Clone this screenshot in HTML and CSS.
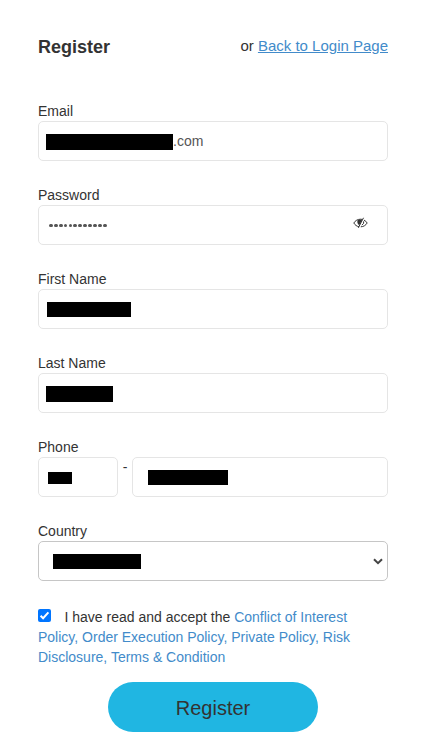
FILE: index.html
```html
<!DOCTYPE html>
<html lang="en">
<head>
<meta charset="utf-8">
<title>Register</title>
<link rel="stylesheet" href="styles.css">
</head>
<body>
<form class="register">
  <header class="head">
    <h1>Register</h1>
    <p>or <a href="#">Back to Login Page</a></p>
  </header>

  <div class="field">
    <label>Email</label>
    <div class="box email"><span class="mask"></span>.com</div>
  </div>
  <div class="field">
    <label>Password</label>
    <div class="box password">
      <span class="dots"><i></i><i></i><i></i><i></i><i></i><i></i><i></i><i></i><i></i><i></i><i></i><i></i></span>
      <svg class="eye" width="15" height="12" viewBox="0 0 15 12" fill="none" stroke="#333" stroke-width="1">
        <path d="M6.200 9.800C3.800 9.400 2 8 .8 6C2.300 3.600 4.700 2.200 7.500 2.200L9 2.400"/>
        <path d="M11 3.100C12.300 3.700 13.400 4.700 14.200 6C12.700 8.400 10.500 9.700 7.800 9.800"/>
        <path d="M4.600 3.200Q3.600 6.400 6.200 8.200L9.300 2.700Q6.600 1.900 4.600 3.200Z" fill="#333" stroke="none"/>
        <path d="M10.700 4.300Q11.300 6.800 8.800 8.100"/>
        <path d="M10.500.8 5.300 10.800"/>
      </svg>
    </div>
  </div>
  <div class="field">
    <label>First Name</label>
    <div class="box first"><span class="mask"></span></div>
  </div>
  <div class="field">
    <label>Last Name</label>
    <div class="box last"><span class="mask"></span></div>
  </div>
  <div class="field">
    <label>Phone</label>
    <div class="phone-row">
      <div class="box code"><span class="mask"></span></div>
      <span class="dash">-</span>
      <div class="box phone"><span class="mask"></span></div>
    </div>
  </div>
  <div class="field">
    <label>Country</label>
    <div class="box country">
      <span class="mask"></span>
      <svg class="chevron" width="10" height="7" viewBox="0 0 10 7" fill="none" stroke="#444" stroke-width="2"><path d="M1 1.200 5 5.200 9 1.200"/></svg>
    </div>
  </div>

  <p class="terms"><span class="check"><svg width="13" height="13" viewBox="0 0 13 13" fill="none" stroke="#fff" stroke-width="2"><path d="M2.600 6.700 5.100 9.200 10.400 3.300"/></svg></span>I have read and accept the <a href="#">Conflict of Interest Policy, Order Execution Policy, Private Policy, Risk Disclosure, Terms &amp; Condition</a></p>
  <button class="submit" type="button">Register</button>
</form>
</body>
</html>
```
FILE: styles.css
```css
* { box-sizing: border-box; }
body {
  margin: 0;
  background: #fff;
  color: #333;
  font: 14px/20px "Liberation Sans", Arial, sans-serif;
}
a { color: #428bca; text-decoration: none; }
.register { width: 350px; margin-left: 38px; padding-top: 36px; }
.head {
  display: flex;
  justify-content: space-between;
  height: 65px;
}
.head h1 { margin: 0; font-size: 18px; line-height: 22px; }
.head p { margin: 0; font-size: 15px; line-height: 20px; }
.head a { text-decoration: underline; }
.field { margin-bottom: 24px; }
.field label { display: block; height: 20px; }
.box {
  display: flex;
  height: 40px;
  border: 1px solid #e5e5e5;
  border-radius: 5px;
  background: #fff;
  color: #555;
}
.mask { display: block; flex: none; background: #000; }
.email { padding-left: 7px; line-height: 38px; }
.email .mask { width: 127px; height: 16px; margin-top: 12px; }
.password {
  align-items: center;
  justify-content: space-between;
  padding: 0 19px 0 10px;
}
.dots { display: flex; gap: 1.1px; padding-top: 1px; }
.dots i { width: 3.8px; height: 3px; border-radius: 1.5px; background: #555; }
.eye { margin-bottom: 5px; }
.first { padding: 12px 0 0 8px; }
.first .mask { width: 84px; height: 15px; }
.last { padding: 12px 0 0 7px; }
.last .mask { width: 67px; height: 16px; }
.phone-row { display: flex; }
.code { width: 80px; padding: 14px 0 0 9px; }
.code .mask { width: 24px; height: 12px; }
.dash { width: 14px; text-align: center; }
.phone { flex: 1; padding: 12px 0 0 15px; }
.phone .mask { width: 80px; height: 15px; }
.country {
  justify-content: space-between;
  padding: 12px 4px 0 14px;
  border-color: #c6c6c6;
}
.country .mask { width: 88px; height: 15px; }
.chevron { margin-top: 4px; }
.terms { margin: 26px 0 15px; }
.check {
  display: inline-block;
  width: 13px;
  height: 13px;
  margin-right: 13.5px;
  border-radius: 2px;
  background: #0075ff;
  vertical-align: 0;
}
.check svg { display: block; }
.submit {
  display: block;
  width: 210px;
  height: 50px;
  margin-left: 70px;
  padding: 2px 0 0;
  border: 0;
  border-radius: 25px;
  background: #20b6e2;
  color: #333;
  font: 20px/24px "Liberation Sans", Arial, sans-serif;
}
```
